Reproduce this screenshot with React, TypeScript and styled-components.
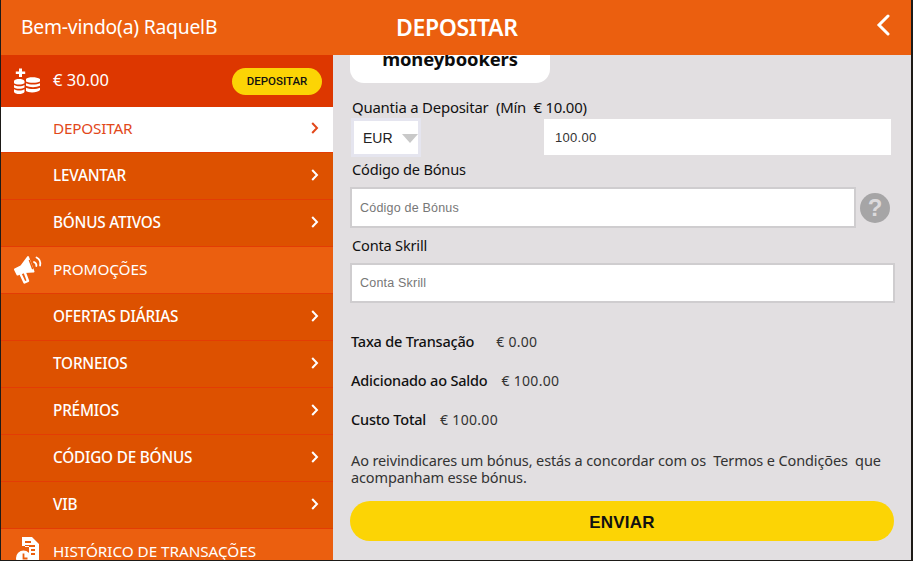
import React from "react";
import styled, { createGlobalStyle } from "styled-components";

const Global = createGlobalStyle`
  html, body { margin: 0; padding: 0; background: #1d1a17; }
  * { box-sizing: border-box; }
`;

const UI = `"Noto Sans", "Open Sans", sans-serif`;
const ARIAL = `"Liberation Sans", Arial, sans-serif`;

const Frame = styled.div`
  width: 913px; height: 561px; padding: 0 2px 1px 1px;
  display: flex; flex-direction: column; overflow: hidden; background: #1d1a17;
`;
const Header = styled.header`
  height: 55px; flex: none; background: #eb5f0f; color: #fff;
  display: grid; grid-template-columns: 395px 1fr 40px; align-items: center;
  font-family: ${UI};
`;
const Welcome = styled.div`font-size: 19.3px; padding-left: 20px; letter-spacing: -0.2px; margin-top: -2px;`;
const Title = styled.div`font-size: 23px; font-weight: 600; letter-spacing: -0.35px; margin-top: -2px;`;
const Back = styled.div`display: flex; justify-content: flex-start; padding-left: 5px; margin-top: -5px;`;
const Body = styled.div`flex: 1; min-height: 0; display: flex; overflow: hidden;`;
const Side = styled.nav`width: 332px; flex: none; display: flex; flex-direction: column; font-family: ${UI};`;
const Balance = styled.div`
  height: 52px; flex: none; background: #dd3700; color: #fff;
  display: flex; align-items: center; padding: 0 11px 0 12px;
`;
const Amount = styled.span`font-size: 16.5px; margin-left: 12px; flex: 1; margin-top: -3px;`;
const MiniBtn = styled.div`
  width: 90px; height: 27px; border-radius: 14px; background: #fcd405; color: #111;
  font: 500 11.5px Roboto, ${ARIAL}; display: flex; align-items: center; justify-content: center;
`;
const Row = styled.div<{ $kind?: "active" | "head" }>`
  height: 47px; flex: none; display: flex; align-items: center; position: relative;
  padding: 0 14px 3px ${p => (p.$kind === "head" ? 11 : 52)}px;
  font-size: 15.3px; letter-spacing: ${p => (p.$kind === "head" ? "-0.05px" : "-0.2px")};
  border-top: 1px solid #e33c05;
  background: ${p => (p.$kind === "active" ? "#fff" : p.$kind === "head" ? "#eb5f0f" : "#dd5100")};
  color: ${p => (p.$kind === "active" ? "#e2481a" : "#fff")};
  font-weight: ${p => (p.$kind ? 400 : 500)};
`;
const ActiveRow = styled(Row)`height: 45px; border-top: 0;`;
const HeadIcon = styled.span`width: 32px; margin-right: 9px; display: flex; justify-content: center;`;
const Label = styled.span`flex: 1; white-space: nowrap;`;
const Main = styled.main`
  flex: 1; min-width: 0; background: #e2dfe1; padding: 0 0 0 17px;
  font-family: ${UI}; color: #111; overflow: hidden;
`;
const LogoCard = styled.div`
  width: 200px; height: 28px; background: #fff; border-radius: 0 0 14px 14px;
  overflow: hidden; display: flex; justify-content: center; align-items: flex-start;
  font-size: 18.4px; font-weight: 700; letter-spacing: -0.1px; color: #0c0c0c;
`;
const LogoText = styled.span`margin-top: -6px; line-height: 20px;`;
const FieldLabel = styled.div<{ $top: number; $size?: number }>`
  font-size: ${p => p.$size ?? 14.6}px; letter-spacing: -0.2px; line-height: 18px;
  margin: ${p => p.$top}px 0 0 2px; height: 18px; white-space: nowrap;
`;
const AmountRow = styled.div`display: flex; margin-top: 2px; align-items: flex-start;`;
const Select = styled.div`
  width: 70px; height: 39px; margin-left: 1px; border: 3px solid #e5e5ef; background: #fff;
  font: 14px ${ARIAL}; color: #222; display: flex; align-items: center; padding-left: 9px; gap: 9px;
`;
const Caret = styled.span`
  width: 0; height: 0; border-left: 8px solid transparent; border-right: 8px solid transparent;
  border-top: 9px solid #c9c9c9; margin-top: 2px;
`;
const AmountInput = styled.div`
  width: 347px; height: 36px; margin: 1px 0 0 123px; background: #fff; color: #333;
  font: 13px ${ARIAL}; letter-spacing: .3px; display: flex; align-items: center; padding-left: 11px;
`;
const BonusRow = styled.div`display: flex; align-items: center; margin-top: 9px; gap: 4px;`;
const TextInput = styled.div<{ $w: number; $h: number }>`
  width: ${p => p.$w}px; height: ${p => p.$h}px; background: #fff; border: 2px solid #cfcdcf;
  font: 12.5px ${ARIAL}; color: #777; display: flex; align-items: center; padding-left: 8px; letter-spacing: .2px;
`;
const Help = styled.div`
  width: 30px; height: 30px; border-radius: 50%; background: #a6a5a6; color: #dcdadc;
  font: 700 24px ${ARIAL}; display: flex; align-items: center; justify-content: center;
`;
const SkrillField = styled.div`margin-top: 9px;`;
const Summary = styled.div<{ $top: number; $gap: number }>`
  margin-top: ${p => p.$top}px; height: 20px; line-height: 20px; font-size: 14.5px; letter-spacing: -0.2px;
  display: flex; gap: ${p => p.$gap}px; padding-left: 1px; font-weight: 500; white-space: nowrap;
`;
const Money = styled.span`font-weight: 400; color: #333; font-size: 14px; letter-spacing: .3px; margin-top: 1px;`;
const Note = styled.p`
  margin: 23px 0 0 1px; font-size: 14.5px; line-height: 17px; color: #333; letter-spacing: -0.12px; white-space: pre; width: 550px;
`;
const Submit = styled.button`
  display: block; width: 544px; height: 40px; margin-top: 15px; padding: 3px 0 0; border: 0; border-radius: 20px;
  background: #fcd405; color: #111; font: 700 17px ${ARIAL}; letter-spacing: .2px;
`;

const Chevron = ({ color = "#fff" }: { color?: string }) => (
  <svg width="8" height="12" viewBox="0 0 8 12" fill="none" stroke={color} strokeWidth="2" aria-hidden>
    <path d="M1.2 1 6 6l-4.800 5" />
  </svg>
);
const Coins = () => (
  <svg width="28" height="30" viewBox="0 0 28 30" fill="#fff" aria-hidden>
    <path d="M6 2.500h3v3h3.200v2.600H9v3H6v-3H2.800V5.500H6z" />
    <path d="M1 15c1-2.600 9-2.600 10.500 0v2.200C9 19 3 19 1 17.200zM1 19c3 1.800 8 1.800 10.500 0v2.500C9 23.300 3 23.300 1 21.500zM1 23.200c3 1.800 8 1.800 10.500 0V26c-2 2.800-9 2.800-10.500 0z" />
    <path d="M13 13c1.500-2.400 11-2.400 14 0v2.400c-3 1.800-11 1.800-14 0zM13 17.300c3.500 1.700 10.500 1.700 14 0v2.500c-3.500 1.800-10.500 1.800-14 0zM13 21.700c3.500 1.700 10.500 1.700 14 0v2.300c-2 3-12 3-14 1z" />
  </svg>
);
const Megaphone = () => (
  <svg width="30" height="30" viewBox="0 0 30 30" fill="none" stroke="#fff" strokeLinejoin="round" strokeLinecap="round" aria-hidden>
    <path d="M2 15.500 8 12.500 15 3l5.500 14.500-9 .5-7 2.500z" fill="#fff" strokeWidth="2" />
    <path d="M16.500 6.500l3 8" stroke="#eb5f0f" strokeWidth="1.500" />
    <path d="m8 21 3.500 7.500 3.500-1.500-3-8" strokeWidth="2.400" />
    <path d="M21 8c1.800.8 2.600 2.300 2.400 4M23.500 3.500c3 1.500 4.300 4.500 3.600 8" strokeWidth="1.800" />
  </svg>
);
const Receipt = () => (
  <svg width="28" height="30" viewBox="0 0 28 30" aria-hidden>
    <path fill="#fff" d="M8 1h10l7 7v20H15v-18H8zM11 5v2h6V5zm0 4v2h10V9zm6 4v2h4v-2zm0 4v2h4v-2z" fillRule="evenodd" />
    <circle cx="9.500" cy="22" r="7.500" fill="#fff" />
    <path d="M9.500 17.500V22.500h4" fill="none" stroke="#eb5f0f" strokeWidth="1.800" />
  </svg>
);

const Item = ({ children }: { children: React.ReactNode }) => (
  <Row><Label>{children}</Label><Chevron /></Row>
);

export default function App() {
  return (
    <Frame>
      <Global />
      <Header>
        <Welcome>Bem-vindo(a) RaquelB</Welcome>
        <Title>DEPOSITAR</Title>
        <Back>
          <svg width="14" height="22" viewBox="0 0 14 22" fill="none" stroke="#fff" strokeWidth="3" strokeLinecap="round" aria-hidden>
            <path d="M12 2 3 11l9 9" />
          </svg>
        </Back>
      </Header>
      <Body>
        <Side>
          <Balance>
            <Coins />
            <Amount>€ 30.00</Amount>
            <MiniBtn>DEPOSITAR</MiniBtn>
          </Balance>
          <ActiveRow $kind="active"><Label>DEPOSITAR</Label><Chevron color="#e2481a" /></ActiveRow>
          <Item>LEVANTAR</Item>
          <Item>BÓNUS ATIVOS</Item>
          <Row $kind="head"><HeadIcon><Megaphone /></HeadIcon><Label>PROMOÇÕES</Label></Row>
          <Item>OFERTAS DIÁRIAS</Item>
          <Item>TORNEIOS</Item>
          <Item>PRÉMIOS</Item>
          <Item>CÓDIGO DE BÓNUS</Item>
          <Item>VIB</Item>
          <Row $kind="head"><HeadIcon><Receipt /></HeadIcon><Label>HISTÓRICO DE TRANSAÇÕES</Label></Row>
        </Side>
        <Main>
          <LogoCard><LogoText>moneybookers</LogoText></LogoCard>
          <FieldLabel $top={15} $size={14.9}>Quantia a Depositar&nbsp; (Mín&nbsp; € 10.00)</FieldLabel>
          <AmountRow>
            <Select>EUR<Caret /></Select>
            <AmountInput>100.00</AmountInput>
          </AmountRow>
          <FieldLabel $top={3}>Código de Bónus</FieldLabel>
          <BonusRow>
            <TextInput $w={506} $h={41}>Código de Bónus</TextInput>
            <Help>?</Help>
          </BonusRow>
          <FieldLabel $top={8}>Conta Skrill</FieldLabel>
          <SkrillField><TextInput $w={545} $h={40}>Conta Skrill</TextInput></SkrillField>
          <Summary $top={28} $gap={22}>Taxa de Transação <Money>€ 0.00</Money></Summary>
          <Summary $top={19} $gap={14}>Adicionado ao Saldo <Money>€ 100.00</Money></Summary>
          <Summary $top={19} $gap={14}>Custo Total <Money>€ 100.00</Money></Summary>
          <Note>{"Ao reivindicares um bónus, estás a concordar com os  Termos e Condições  que\nacompanham esse bónus."}</Note>
          <Submit>ENVIAR</Submit>
        </Main>
      </Body>
    </Frame>
  );
}
